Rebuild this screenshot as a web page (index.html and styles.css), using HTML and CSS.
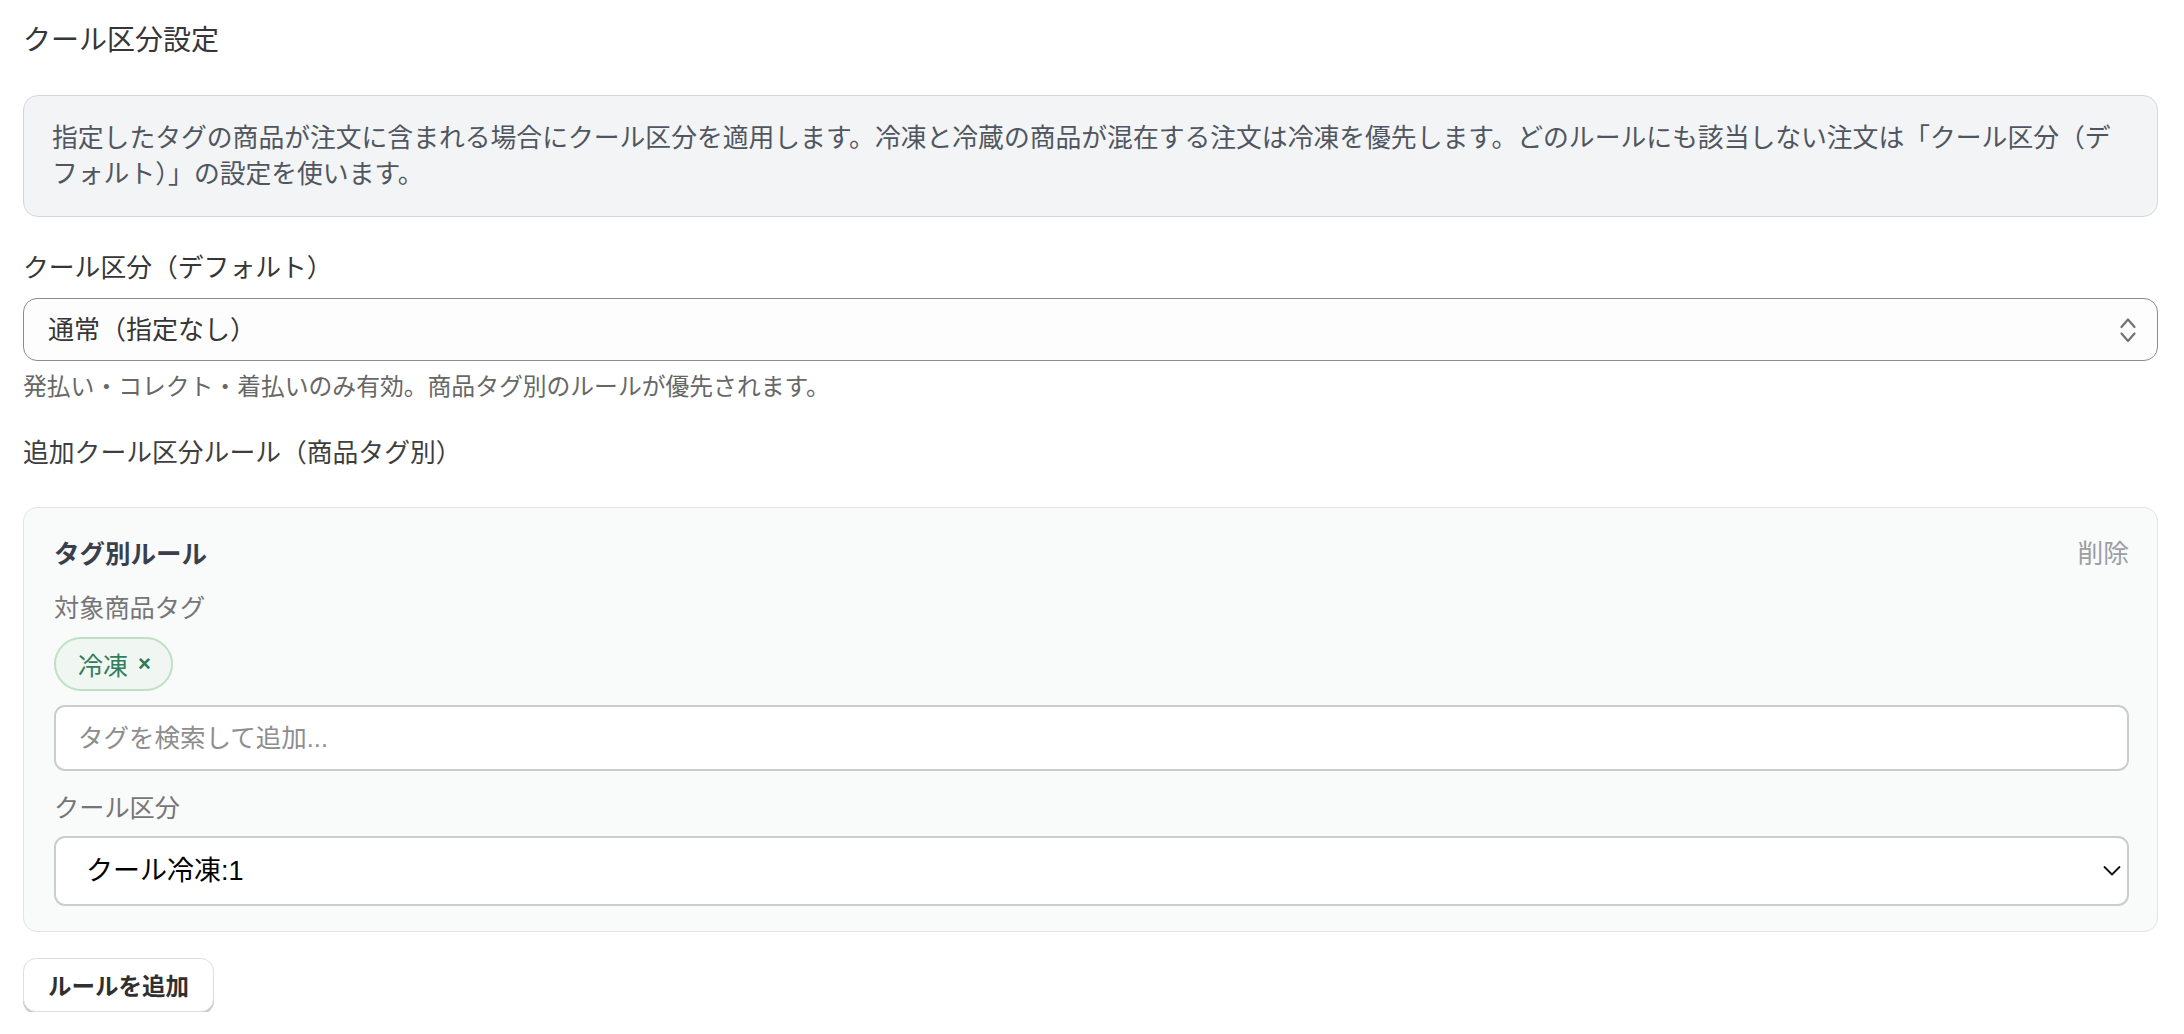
FILE: index.html
```html
<!DOCTYPE html>
<html lang="ja">
<head>
    <meta charset="UTF-8">
    <meta name="viewport" content="width=device-width, initial-scale=1.0">
    <title>クール区分設定</title>
    <link rel="stylesheet" href="styles.css">
</head>
<body>
    <div class="page">
        <h2 class="page-title">クール区分設定</h2>

        <div class="notice">指定したタグの商品が注文に含まれる場合にクール区分を適用します。冷凍と冷蔵の商品が混在する注文は冷凍を優先します。どのルールにも該当しない注文は「クール区分（デフォルト）」の設定を使います。</div>

        <div class="field">
            <label class="field-label" for="cool-default">クール区分（デフォルト）</label>
            <div class="select-wrap">
                <select id="cool-default" class="select select-default">
                    <option>通常（指定なし）</option>
                    <option>クール冷蔵:2</option>
                    <option>クール冷凍:1</option>
                </select>
                <svg class="select-icon icon-updown" width="16" height="26" viewBox="0 0 16 26" fill="none" stroke="#727272" stroke-width="2.2" stroke-linecap="round" stroke-linejoin="round">
                    <polyline points="1.5,10 8,2.5 14.5,10"/>
                    <polyline points="1.5,16.5 8,24 14.5,16.5"/>
                </svg>
            </div>
            <p class="help">発払い・コレクト・着払いのみ有効。商品タグ別のルールが優先されます。</p>
        </div>

        <div class="section-label">追加クール区分ルール（商品タグ別）</div>

        <div class="rule-card">
            <div class="rule-head">
                <span class="rule-title">タグ別ルール</span>
                <button class="link-btn" type="button">削除</button>
            </div>

            <div class="rule-label">対象商品タグ</div>
            <div class="chips">
                <span class="chip">冷凍<button class="chip-x" type="button">×</button></span>
            </div>
            <input class="tag-input" type="text" placeholder="タグを検索して追加...">

            <div class="rule-label rule-label-cool">クール区分</div>
            <div class="select-wrap select-wrap-rule">
                <select class="select select-rule">
                    <option>クール冷凍:1</option>
                    <option>クール冷蔵:2</option>
                </select>
                <svg class="select-icon icon-down" width="18" height="11" viewBox="0 0 18 11" fill="none" stroke="#111" stroke-width="1.8" stroke-linecap="round" stroke-linejoin="round">
                    <polyline points="1.5,1.5 9,9 16.5,1.5"/>
                </svg>
            </div>
        </div>

        <button class="add-btn" type="button">ルールを追加</button>
    </div>
</body>
</html>
```

FILE: styles.css
```css
body {
    margin: 0;
    padding: 0;
    background: #ffffff;
    color: #363636;
    font-family: "Liberation Sans", "Noto Sans CJK JP", sans-serif;
}

.page {
    padding: 21px 26px 0 23px;
}

.page-title {
    margin: 0;
    font-size: 28px;
    line-height: 40px;
    font-weight: 400;
    color: #363636;
}

/* 説明ボックス */
.notice {
    margin-top: 34px;
    padding: 24px 28px;
    background: #f3f4f6;
    border: 1px solid #d3d6dc;
    border-radius: 15px;
    font-size: 25.8px;
    line-height: 36px;
    color: #50565f;
}

.field {
    margin-top: 33px;
}

.field-label {
    display: block;
    font-size: 25.8px;
    line-height: 36px;
    color: #363636;
}

.select-wrap {
    position: relative;
    margin-top: 12px;
}

.select {
    display: block;
    width: 100%;
    margin: 0;
    -webkit-appearance: none;
    appearance: none;
    font-family: inherit;
    outline: none;
}

.select-default {
    height: 63px;
    padding: 0 60px 0 24px;
    background: #fdfdfd;
    border: 1px solid #8c8c8c;
    border-radius: 14px;
    font-size: 26px;
    color: #363636;
}

.select-icon {
    position: absolute;
    top: 50%;
    transform: translateY(-50%);
    pointer-events: none;
}

.icon-updown {
    right: 22px;
}

.help {
    margin: 9px 0 0;
    font-size: 23.8px;
    line-height: 34px;
    color: #676767;
}

.section-label {
    margin-top: 31px;
    font-size: 25.8px;
    line-height: 36px;
    color: #3e3e3e;
}

/* ルールカード */
.rule-card {
    margin-top: 36px;
    padding: 25px 28px 25px 30px;
    background: #f9fafa;
    border: 1px solid #e1e3e5;
    border-radius: 14px;
}

.rule-head {
    display: flex;
    justify-content: space-between;
    align-items: center;
    height: 36px;
}

.rule-title {
    font-size: 25.5px;
    font-weight: 700;
    color: #39404b;
}

.link-btn {
    padding: 0;
    border: none;
    background: none;
    font-family: inherit;
    font-size: 25.8px;
    color: #9c9ea2;
    cursor: pointer;
}

.rule-label {
    margin-top: 21px;
    font-size: 25.2px;
    line-height: 36px;
    color: #767676;
}

.rule-label-cool {
    margin-top: 19px;
}

.chips {
    display: flex;
    margin-top: 11px;
}

.chip {
    display: inline-flex;
    align-items: center;
    gap: 10px;
    height: 54px;
    box-sizing: border-box;
    padding: 0 20px 0 22px;
    background: #f0f7f2;
    border: 2px solid #bfe0c3;
    border-radius: 27px;
    font-size: 25px;
    color: #327d5a;
}

.chip-x {
    padding: 0;
    border: none;
    background: none;
    font-family: "Liberation Sans", sans-serif;
    font-size: 22px;
    font-weight: 700;
    line-height: 1;
    color: #2e7a57;
    cursor: pointer;
}

.tag-input {
    display: block;
    width: 100%;
    height: 66px;
    box-sizing: border-box;
    margin-top: 14px;
    padding: 0 22px;
    background: #ffffff;
    border: 2px solid #cbccd0;
    border-radius: 11px;
    font-family: inherit;
    font-size: 25.5px;
    color: #363636;
    outline: none;
}

.tag-input::placeholder {
    color: #8e8e8e;
}

.select-wrap-rule {
    margin-top: 10px;
}

.select-rule {
    height: 70px;
    padding: 0 40px 0 30px;
    background: #ffffff;
    border: 2px solid #cbccd0;
    border-radius: 11px;
    font-size: 27px;
    color: #000000;
}

.icon-down {
    right: 8px;
}

.add-btn {
    display: block;
    margin-top: 26px;
    height: 54px;
    padding: 0 24px;
    background: #ffffff;
    border: 1px solid #dedede;
    border-radius: 13px;
    box-shadow: 0 2px 0 #c9c9c9;
    font-family: inherit;
    font-size: 23.5px;
    font-weight: 700;
    color: #303030;
    cursor: pointer;
}
```
